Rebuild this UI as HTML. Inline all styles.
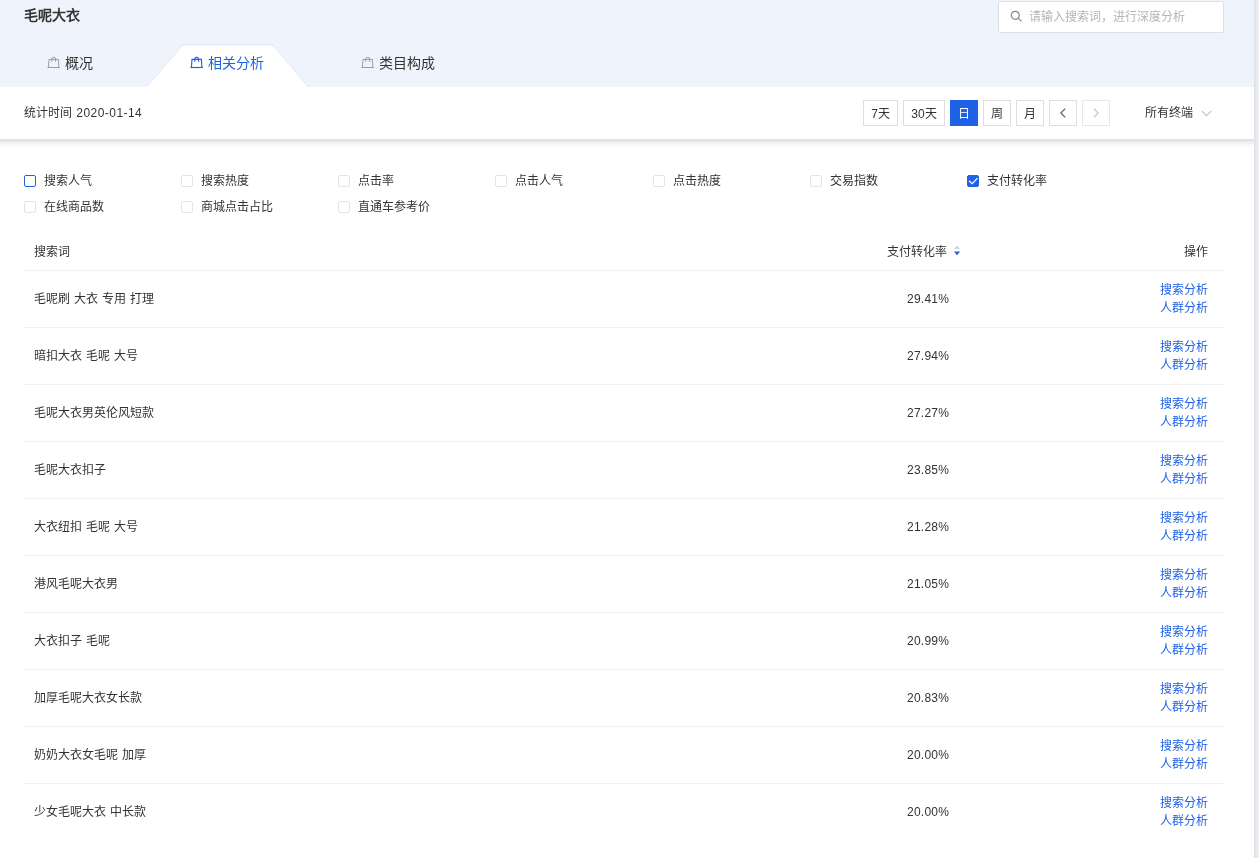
<!DOCTYPE html>
<html lang="zh-CN">
<head>
<meta charset="utf-8">
<title>毛呢大衣</title>
<style>
*{box-sizing:border-box;margin:0;padding:0}
html,body{width:1259px;height:858px;overflow:hidden;background:#fff}
body{font-family:"Liberation Sans",sans-serif;font-size:12px;color:#333;position:relative}
.abs{position:absolute}
#root{position:absolute;left:0;top:0;width:1259px;height:858px;will-change:transform}
#hdr{position:absolute;left:0;top:0;width:1254px;height:87px;background:#eff3fb}
#strip{position:absolute;left:1254px;top:0;width:5px;height:858px;background:linear-gradient(to right,#dcdfe4 0,#dde0e5 .5px,#e3e6eb 1.5px,#e7eaef 2.5px,#eaedf2 3.5px,#eceff4 4.5px)}
#title{position:absolute;left:24px;top:5px;font-size:14px;font-weight:bold;line-height:20px;color:#333}
#search{position:absolute;left:998px;top:1px;width:226px;height:32px;background:#fff;border:1px solid #dcdfe6;border-radius:2px}
#search span{position:absolute;left:30px;top:0;line-height:31px;font-size:12px;color:#b5b5b5;white-space:nowrap}
#search svg{position:absolute;left:11px;top:8px}
.tab{position:absolute;top:53px;height:20px;line-height:20px;font-size:14px;color:#333;white-space:nowrap}
.tab svg{position:absolute;left:-18px;top:2px}
.tab.on{color:#2062e6}
#tabbg{position:absolute;left:140px;top:44px}
#bar{position:absolute;left:0;top:87px;width:1254px;height:52px;background:#fff}
#shd{position:absolute;left:0;top:139px;width:1254px;height:10px;background:linear-gradient(to bottom,#e1e1e1 0,#e4e4e4 1.5px,#eee 3px,#f6f6f6 5px,#fbfbfb 7px,#fff 9.5px)}
#stat{position:absolute;left:24px;top:103px;line-height:20px;font-size:12px;color:#333}
.btn{position:absolute;top:100px;height:26px;line-height:26px;border:1px solid #dedede;background:#fff;text-align:center;font-size:12px;color:#333}
.btn.on{background:#2062e6;border-color:#2062e6;color:#fff}
.btn svg{position:absolute;left:50%;top:50%;margin:-5.5px 0 0 -3px}
#stat b{font-weight:normal;letter-spacing:.45px;margin-left:1px}
#term{position:absolute;left:1145px;top:103px;line-height:20px;font-size:12px;color:#333}
#term svg{position:absolute;left:56.4px;top:7.2px}
.cb{position:absolute;white-space:nowrap;line-height:16px;font-size:12px;color:#333;padding-left:20px}
.cb i{position:absolute;left:0;top:2px;width:12px;height:12px;border:1px solid #e4e4e4;border-radius:2px;background:#fff}
.cb.hl i{border-color:#2062e6;border-width:1px}
.cb.ck i{border-color:#2062e6;background:#2062e6}
.cb.ck svg{position:absolute;left:0;top:2px}
#tbl{position:absolute;left:24px;top:233px;width:1200px;word-spacing:.7px}
.th{position:relative;height:38px;border-bottom:1px solid #f2f2f2}
.th span{position:absolute;top:9px;line-height:20px;white-space:nowrap}
.tr{position:relative;height:57px;border-bottom:1px solid #f2f2f2}
.tr:last-child{border-bottom:none}
.tr .k{position:absolute;left:10px;top:18px;line-height:20px;white-space:nowrap}
.tr .v{position:absolute;right:274.8px;top:18px;line-height:20px;letter-spacing:.25px}
.tr .a{position:absolute;right:16px;top:10px;line-height:18px;text-align:right;color:#2062e6}
</style>
</head>
<body>
<div id="root">
<div id="hdr"></div>
<svg id="tabbg" width="176" height="43" viewBox="140 44 176 43"><path d="M146.6 87 L181.6 46.5 Q183.2 44.9 185.6 44.9 L269.9 44.9 Q272.3 44.9 273.9 46.5 L308.2 87 Z" fill="#fff"/><path d="M146.6 87 L181.6 46.5 Q183.2 44.9 185.6 44.9 L269.9 44.9 Q272.3 44.9 273.9 46.5 L308.2 87" fill="none" stroke="#8c96b4" stroke-opacity=".16" stroke-width="1"/></svg>
<div id="title">毛呢大衣</div>
<div id="search"><svg width="13" height="13" viewBox="0 0 13 13" fill="none" stroke="#858585" stroke-width="1.2"><circle cx="5.3" cy="5.3" r="4"/><path d="M8.2 8.2 L11.4 11.4"/></svg><span>请输入搜索词，进行深度分析</span></div>

<div class="tab" style="left:65px"><svg width="14" height="14" viewBox="0 0 14 14" fill="none" stroke="#9c9c9c" stroke-width="1"><path d="M2 4.4 H11.4 L11.9 12.5 H1.4 Z"/><path d="M0.5 12.5 H12.8"/><path d="M4.8 6.8 V4.2 Q4.8 2.3 6.7 2.3 Q8.6 2.3 8.6 4.2 V6.8"/></svg>概况</div>
<div class="tab on" style="left:208px"><svg width="14" height="14" viewBox="0 0 14 14" fill="none" stroke="#2062e6" stroke-width="1.15"><path d="M2 4.4 H11.4 L11.9 12.5 H1.4 Z"/><path d="M0.5 12.5 H12.8"/><path d="M4.8 6.8 V4.2 Q4.8 2.3 6.7 2.3 Q8.6 2.3 8.6 4.2 V6.8"/></svg>相关分析</div>
<div class="tab" style="left:379px"><svg width="14" height="14" viewBox="0 0 14 14" fill="none" stroke="#9c9c9c" stroke-width="1"><path d="M2 4.4 H11.4 L11.9 12.5 H1.4 Z"/><path d="M0.5 12.5 H12.8"/><path d="M4.8 6.8 V4.2 Q4.8 2.3 6.7 2.3 Q8.6 2.3 8.6 4.2 V6.8"/></svg>类目构成</div>

<div id="bar"></div><div id="shd"></div>
<div id="stat">统计时间 <b>2020-01-14</b></div>
<div class="btn" style="left:863px;width:35px">7天</div>
<div class="btn" style="left:903px;width:42px">30天</div>
<div class="btn on" style="left:950px;width:28px">日</div>
<div class="btn" style="left:983px;width:28px">周</div>
<div class="btn" style="left:1016px;width:28px">月</div>
<div class="btn" style="left:1049px;width:28px"><svg width="6" height="10" viewBox="0 0 6 10" fill="none" stroke="#666" stroke-width="1.3"><path d="M5.2 0.6 L0.8 5 L5.2 9.4"/></svg></div>
<div class="btn" style="left:1082px;width:28px;border-color:#e8e8e8"><svg width="6" height="10" viewBox="0 0 6 10" fill="none" stroke="#c8c8c8" stroke-width="1.3"><path d="M0.8 0.6 L5.2 5 L0.8 9.4"/></svg></div>
<div id="term">所有终端<svg width="11" height="7" viewBox="0 0 11 7" fill="none" stroke="#c4c4c4" stroke-width="1.1"><path d="M0.8 1 L5.5 5.7 L10.2 1"/></svg></div>

<div class="cb hl" style="left:24px;top:173px"><i></i>搜索人气</div>
<div class="cb" style="left:181px;top:173px"><i></i>搜索热度</div>
<div class="cb" style="left:338px;top:173px"><i></i>点击率</div>
<div class="cb" style="left:495px;top:173px"><i></i>点击人气</div>
<div class="cb" style="left:653px;top:173px"><i></i>点击热度</div>
<div class="cb" style="left:810px;top:173px"><i></i>交易指数</div>
<div class="cb ck" style="left:967px;top:173px"><i></i><svg width="12" height="12" viewBox="0 0 12 12" fill="none" stroke="#fff" stroke-width="1.2"><path d="M2 5.7 L5.2 8.6 L10.5 3.1"/></svg>支付转化率</div>
<div class="cb" style="left:24px;top:199px"><i></i>在线商品数</div>
<div class="cb" style="left:181px;top:199px"><i></i>商城点击占比</div>
<div class="cb" style="left:338px;top:199px"><i></i>直通车参考价</div>

<div id="tbl">
<div class="th"><span style="left:10px">搜索词</span><span style="right:277px">支付转化率</span><svg class="abs" style="left:929px;top:12px" width="8" height="11" viewBox="0 0 8 11"><path d="M4.05 0.4 L7.2 4.1 H0.9 Z" fill="#cfd7e5"/><path d="M4.05 10.2 L7.2 6.6 H0.9 Z" fill="#2062e6"/></svg><span style="right:16px">操作</span></div>
<div class="tr"><span class="k">毛呢刷 大衣 专用 打理</span><span class="v">29.41%</span><span class="a">搜索分析<br>人群分析</span></div>
<div class="tr"><span class="k">暗扣大衣 毛呢 大号</span><span class="v">27.94%</span><span class="a">搜索分析<br>人群分析</span></div>
<div class="tr"><span class="k">毛呢大衣男英伦风短款</span><span class="v">27.27%</span><span class="a">搜索分析<br>人群分析</span></div>
<div class="tr"><span class="k">毛呢大衣扣子</span><span class="v">23.85%</span><span class="a">搜索分析<br>人群分析</span></div>
<div class="tr"><span class="k">大衣纽扣 毛呢 大号</span><span class="v">21.28%</span><span class="a">搜索分析<br>人群分析</span></div>
<div class="tr"><span class="k">港风毛呢大衣男</span><span class="v">21.05%</span><span class="a">搜索分析<br>人群分析</span></div>
<div class="tr"><span class="k">大衣扣子 毛呢</span><span class="v">20.99%</span><span class="a">搜索分析<br>人群分析</span></div>
<div class="tr"><span class="k">加厚毛呢大衣女长款</span><span class="v">20.83%</span><span class="a">搜索分析<br>人群分析</span></div>
<div class="tr"><span class="k">奶奶大衣女毛呢 加厚</span><span class="v">20.00%</span><span class="a">搜索分析<br>人群分析</span></div>
<div class="tr"><span class="k">少女毛呢大衣 中长款</span><span class="v">20.00%</span><span class="a">搜索分析<br>人群分析</span></div>
</div>
<div id="strip"></div>
</div>
</body>
</html>
